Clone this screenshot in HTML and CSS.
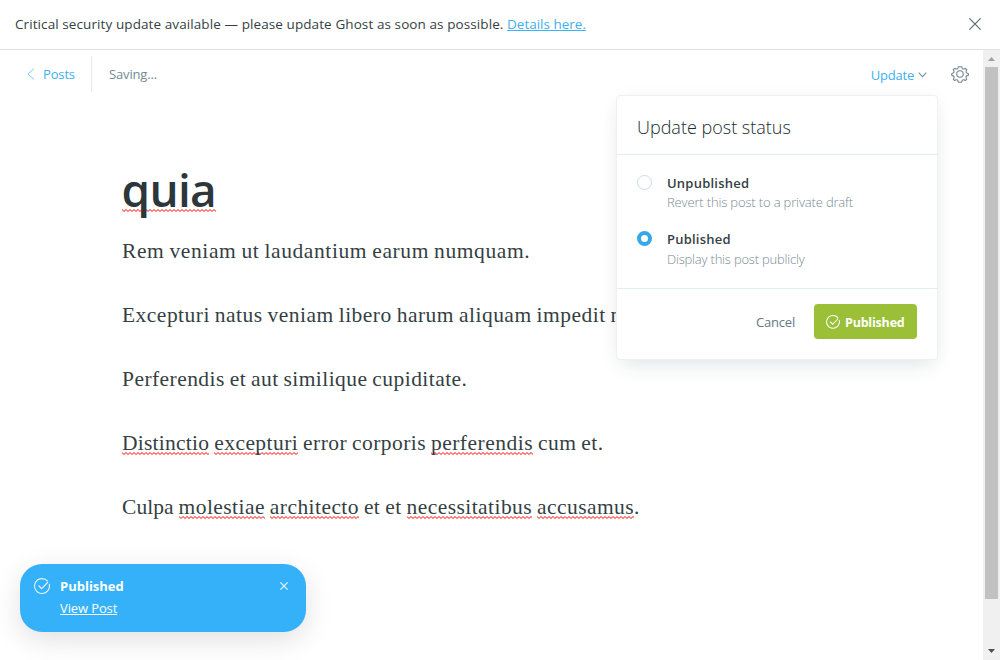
FILE: index.html
```html
<!DOCTYPE html>
<html lang="en">
<head>
<meta charset="utf-8">
<title>Editor</title>
<link rel="stylesheet" href="styles.css">
</head>
<body>
<div class="app">
  <div class="alert">
    <div class="alert-text"><span class="alert-copy">Critical security update available — please update Ghost as soon as possible.</span> <a class="alert-link">Details here.</a></div>
    <svg class="alert-close" viewBox="0 0 12 12"><path d="M.4.4l11.2 11.2M11.6.4L.4 11.6"/></svg>
  </div>
  <div class="main">
    <div class="editor">
      <header class="toolbar">
        <a class="back"><svg class="back-icon" viewBox="0 0 8 12"><path d="M7 .5L1 6l6 5.500"/></svg><span class="back-text">Posts</span></a>
        <span class="saving">Saving...</span>
        <a class="update"><span class="update-text">Update</span><svg class="caret" viewBox="0 0 9 6"><path d="M.7.7l3.800 4L8.300.7"/></svg></a>
        <svg class="gear" viewBox="0 0 24 24"><circle cx="12" cy="12" r="4.300"/><path d="M14.200 2.300l.6 1.900a2 2 0 0 0 2.600 1.200l1.900-.8 1.600 1.700-.8 2a2 2 0 0 0 1.100 2.500l1.900.7v2.300l-1.900.7a2 2 0 0 0-1.100 2.500l.8 2-1.700 1.700-1.900-.9a2 2 0 0 0-2.500 1.100l-.7 2.100H9.900l-.7-2a2 2 0 0 0-2.500-1.200l-2 .9L3.100 19l.9-2a2 2 0 0 0-1.200-2.500L1 13.800v-2.300l1.800-.7A2 2 0 0 0 4 8.300l-.9-2 1.700-1.700 1.900.8a2 2 0 0 0 2.500-1.200l.7-1.900z"/></svg>
      </header>
      <article class="post">
        <h1 class="title"><span class="misspelt">quia</span></h1>
        <p class="para p1">Rem veniam ut laudantium earum numquam.</p>
        <p class="para p2">Excepturi natus veniam libero harum aliquam impedit nisi.</p>
        <p class="para p3">Perferendis et aut similique cupiditate.</p>
        <p class="para p4"><span class="misspelt lead">Distinctio</span> <span class="misspelt">excepturi</span> error corporis <span class="misspelt end">perferendis</span> cum et.</p>
        <p class="para p5"><span class="lead">Culpa</span> <span class="misspelt">molestiae</span> <span class="misspelt">architecto</span> et et <span class="misspelt">necessitatibus</span> <span class="misspelt">accusamus</span>.</p>
      </article>
    </div>
    <div class="scrollbar">
      <svg class="arrow up" viewBox="0 0 7 4"><path d="M0 4L3.500 0 7 4z"/></svg>
      <div class="thumb"></div>
      <svg class="arrow down" viewBox="0 0 7 4"><path d="M0 0h7L3.500 4z"/></svg>
    </div>
  </div>
</div>

<section class="menu">
  <h2 class="menu-title"><span>Update post status</span></h2>
  <div class="options">
    <div class="option">
      <span class="radio"></span>
      <div><div class="label l1">Unpublished</div><div class="desc d1">Revert this post to a private draft</div></div>
    </div>
    <div class="option">
      <span class="radio checked"></span>
      <div><div class="label l2">Published</div><div class="desc d2">Display this post publicly</div></div>
    </div>
  </div>
  <footer class="menu-footer">
    <span class="cancel">Cancel</span>
    <button class="publish"><svg class="check" viewBox="0 0 16 16"><path d="M13.700 3.200A7.300 7.300 0 1 0 15.100 6M4.500 7.500l3.200 3.200L14 4"/></svg><span class="publish-text">Published</span></button>
  </footer>
</section>

<aside class="toast">
  <svg class="toast-check" viewBox="0 0 16 16"><path d="M13.700 3.200A7.450 7.450 0 1 0 15.200 6M4.500 7.500l3.200 3.200L14 4"/></svg>
  <div class="toast-body"><div class="toast-title">Published</div><a class="toast-link">View Post</a></div>
  <svg class="toast-close" viewBox="0 0 8 8"><path d="M.4.4l7.200 7.200M7.600.4L.4 7.600"/></svg>
</aside>
</body>
</html>
```

FILE: styles.css
```css
* { box-sizing: border-box; }
body { margin: 0; width: 1000px; height: 660px; overflow: hidden; background: #fff; font-family: "Open Sans", "Noto Sans", sans-serif; font-size: 13px; color: #343f44; }
svg { display: block; fill: none; flex: none; }
h1, h2, p { margin: 0; }
span, a { white-space: nowrap; }
.app { display: flex; flex-direction: column; height: 660px; }
.alert { display: flex; align-items: center; justify-content: space-between; height: 50px; padding: 0 19px 2px 15px; border-bottom: 1px solid #dfe1e3; font-size: 13.5px; line-height: 20px; }
.alert-copy { letter-spacing: .09px; }
.alert-close { width: 12px; height: 12px; stroke: #54666d; stroke-width: 1.1; }
.alert-link { color: #3eb0ef; text-decoration: underline; }
.main { display: flex; flex: 1; min-height: 0; }
.editor { width: 983px; }
.toolbar { display: flex; align-items: center; height: 48px; padding: 0 14px 0 27px; color: #738a94; }
.back { display: flex; align-items: center; width: 65px; height: 36px; border-right: 1px solid #dfecf4; color: #3eb0ef; }
.back-icon { width: 8px; height: 12px; margin-right: 8px; stroke: #7dcaf3; }
.back-text { letter-spacing: -.15px; }
.saving { margin-left: 17px; letter-spacing: -.15px; }
.update { display: flex; align-items: center; gap: 4px; margin-left: auto; padding-top: 2px; color: #3eb0ef; }
.update-text { letter-spacing: -.2px; }
.caret { width: 9px; height: 6px; stroke: #7196a8; stroke-width: 1.1; }
.gear { width: 18px; height: 18px; margin-left: 24px; stroke: #738a94; stroke-width: 1.500; }
.post { padding: 57px 0 0 122px; }
.title { height: 80px; margin-left: -.5px; font-size: 46px; line-height: 69px; font-weight: 600; letter-spacing: -.7px; color: #2c363b; }
.para { height: 64px; font-family: "Liberation Serif", serif; font-size: 21.5px; line-height: 32px; letter-spacing: .44px; word-spacing: -.9px; white-space: nowrap; color: #343f44; }
.p1 { letter-spacing: .6px; }
.p2 { letter-spacing: .48px; }
.p5 { letter-spacing: .44px; }
.lead { letter-spacing: .25px; }
.p5 .lead { letter-spacing: .05px; }
.end { letter-spacing: .5px; }
.misspelt { background: url("data:image/svg+xml,%3Csvg xmlns='http://www.w3.org/2000/svg' width='4' height='3'%3E%3Cpath d='M-1 1.500L0 .5L2 2.500L4 .5L5 1.500' fill='none' stroke='%23f00' stroke-width='1'/%3E%3C/svg%3E") 0 100% / 4px 3px repeat-x; }
.title .misspelt { background-position: 0 calc(100% - 8px); }
.scrollbar { display: flex; flex-direction: column; align-items: center; width: 17px; padding: 7px 2px 7px; background: #f0f0f0; }
.thumb { width: 13px; height: 532px; margin: 6px 0 auto; background: #c1c1c1; }
.arrow { width: 7px; height: 4px; fill: #505050; }
.up { fill: #a0a0a0; }
.menu { position: absolute; left: 616px; top: 95px; width: 322px; height: 265px; border: 1px solid #edf1f3; border-radius: 4px; background: #fff; background-clip: padding-box; box-shadow: 0 10px 20px -6px rgba(40,55,65,.12), 0 0 18px rgba(0,0,0,.03); }
.menu-title { height: 59px; padding: 0 20px; border-bottom: 1px solid #e1ecf4; font-size: 18px; font-weight: 300; line-height: 62px; color: #202b30; }
.options { height: 134px; padding: 18px 20px 0; border-bottom: 1px solid #e1ecf4; }
.option { display: flex; gap: 15px; height: 56px; }
.radio { width: 15px; height: 15px; margin-top: 2px; border: 1px solid #c5dceb; border-radius: 50%; }
.checked { border: 4px solid #36a8ea; }
.label { font-weight: 600; line-height: 20px; letter-spacing: .22px; white-space: nowrap; }
.desc { color: #788b94; font-weight: 300; line-height: 19px; letter-spacing: -.15px; white-space: nowrap; }
.d2 { padding-top: 1px; letter-spacing: -.2px; }
.menu-footer { display: flex; align-items: center; justify-content: flex-end; gap: 19px; padding: 15px 20px 0; color: #64777f; }
.cancel { letter-spacing: -.2px; }
.publish { display: flex; align-items: center; gap: 6px; width: 103px; height: 35px; padding: 0 0 0 12px; border: 0; border-radius: 4px; background: #9bc038; color: #fff; font: 700 12.5px/20px "Open Sans", sans-serif; letter-spacing: -.2px; }
.publish-text { padding-top: 2px; }
.check { width: 14px; height: 14px; margin-right: -1px; stroke: #fff; stroke-width: 1.200; }
.toast { position: absolute; left: 20px; top: 564px; display: flex; align-items: flex-start; width: 286px; height: 68px; padding: 14px 18px 0 14px; border-radius: 22px; background: #35b1f9; color: #fff; box-shadow: 0 8px 28px rgba(0,0,0,.12); }
.toast-check { width: 16px; height: 16px; stroke: #e0f4ff; stroke-width: 1.1; }
.toast-body { margin: -3px auto 0 10px; line-height: 22px; }
.toast-title { font-weight: 700; }
.toast-link { letter-spacing: -.12px; text-decoration: underline; }
.toast-close { width: 8px; height: 8px; margin-top: 4px; stroke: #e8f7ff; stroke-width: 1.2; }
```
